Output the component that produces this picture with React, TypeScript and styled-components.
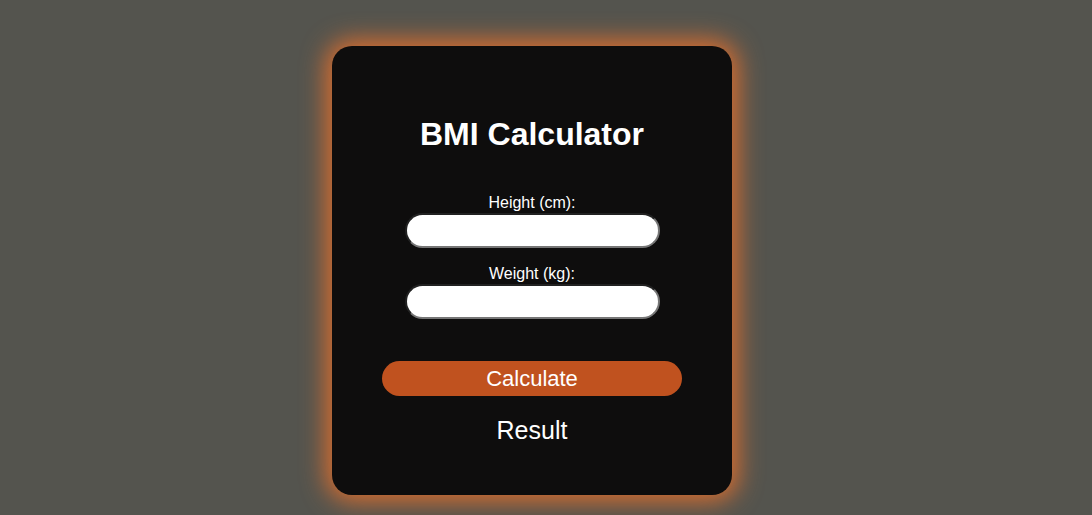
import React, { useState } from "react";
import styled, { createGlobalStyle } from "styled-components";

const Global = createGlobalStyle`
  html, body { margin: 0; padding: 0; background: #54544e; }
  body { font-family: "Liberation Sans", Arial, sans-serif; }
`;

const Page = styled.div`
  display: flex;
  justify-content: center;
  padding: 46px 28px 0 0;
  min-height: 515px;
  box-sizing: border-box;
`;

const Card = styled.div`
  width: 400px;
  height: 449px;
  box-sizing: border-box;
  background: #0e0d0d;
  border-radius: 20px;
  box-shadow: 0 0 24px 6px #dc6e2e;
  display: flex;
  flex-direction: column;
  align-items: center;
  color: #fff;
`;

const Title = styled.h1`
  font-size: 32px;
  font-weight: bold;
  margin: 70px 0 41px;
  line-height: 37px;
`;

const Field = styled.div`
  display: flex;
  flex-direction: column;
  align-items: center;
  margin-bottom: 17px;
`;

const Label = styled.label`
  font-size: 16px;
  line-height: 18px;
  margin-bottom: 1px;
`;

const Input = styled.input`
  width: 255px;
  height: 35px;
  box-sizing: border-box;
  border-radius: 18px;
  border: 2px inset #767676;
  background: #fff;
  padding: 0 12px;
  font-size: 16px;
  outline: none;
`;

const Button = styled.button`
  width: 300px;
  height: 35px;
  margin-top: 25px;
  border: none;
  border-radius: 18px;
  background: #c0521f;
  color: #fff;
  font-family: "Liberation Sans", Arial, sans-serif;
  font-size: 22px;
  cursor: pointer;
`;

const Result = styled.div`
  font-size: 25px;
  line-height: 28px;
  margin-top: 20px;
`;

export default function App() {
  const [h, setH] = useState("");
  const [w, setW] = useState("");
  return (
    <>
      <Global />
      <Page>
        <Card>
          <Title>BMI Calculator</Title>
          <Field>
            <Label>Height (cm):</Label>
            <Input value={h} onChange={(e) => setH(e.target.value)} />
          </Field>
          <Field>
            <Label>Weight (kg):</Label>
            <Input value={w} onChange={(e) => setW(e.target.value)} />
          </Field>
          <Button>Calculate</Button>
          <Result>Result</Result>
        </Card>
      </Page>
    </>
  );
}
